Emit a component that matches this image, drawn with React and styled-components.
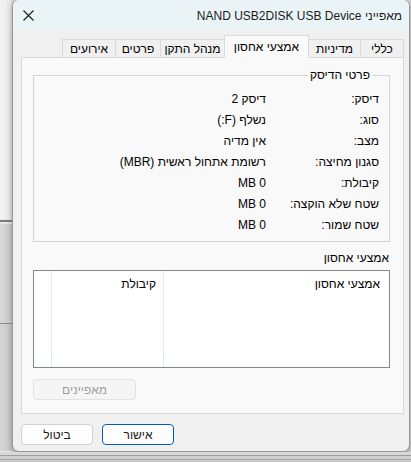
import React from 'react'
import styled, { createGlobalStyle } from 'styled-components'

const GlobalStyle = createGlobalStyle`
  html, body {
    margin: 0;
    padding: 0;
    background: #cfcfcf;
  }
  body {
    font-family: "Liberation Sans", "DejaVu Sans", sans-serif;
    font-size: 12px;
    color: #000;
  }
`

const details = [
    { label: 'דיסק:', value: 'דיסק 2' },
    { label: 'סוג:', value: 'נשלף (F:)' },
    { label: 'מצב:', value: 'אין מדיה' },
    { label: 'סגנון מחיצה:', value: 'רשומת אתחול ראשית (MBR)' },
    { label: 'קיבולת:', value: 'MB 0' },
    { label: 'שטח שלא הוקצה:', value: 'MB 0' },
    { label: 'שטח שמור:', value: 'MB 0' },
]

const tabs = [
    { title: 'כללי', width: 44 },
    { title: 'מדיניות', width: 53 },
    { title: 'אמצעי אחסון', width: 85, active: true },
    { title: 'מנהל התקן', width: 65 },
    { title: 'פרטים', width: 46 },
    { title: 'אירועים', width: 54 },
]

export default function App() {
    return (
        <>
            <GlobalStyle />
            <Screen>
                <LeftStrip>
                    <StripTop />
                    <StripMid />
                    <StripLow />
                </LeftStrip>
                <Dialog dir="rtl">
                    <TitleBar>
                        <Title>מאפייני NAND USB2DISK USB Device</Title>
                        <CloseButton aria-label="סגור">
                            <svg width="11" height="11" viewBox="0 0 11 11">
                                <path d="M0.5 0.5 L10.5 10.5 M10.5 0.5 L0.5 10.5" stroke="#1a1a1a" strokeWidth="1.1" fill="none" />
                            </svg>
                        </CloseButton>
                    </TitleBar>

                    <Body>
                        <TabRow>
                            {tabs.map(t => (
                                <Tab key={t.title} $active={t.active} $width={t.width}>{t.title}</Tab>
                            ))}
                        </TabRow>

                        <Panel>
                            <GroupBox>
                                <Legend>פרטי הדיסק</Legend>
                                <DetailGrid>
                                    {details.map(d => (
                                        <React.Fragment key={d.label}>
                                            <DetailLabel>{d.label}</DetailLabel>
                                            <DetailValue>{d.value}</DetailValue>
                                        </React.Fragment>
                                    ))}
                                </DetailGrid>
                            </GroupBox>

                            <SectionLabel>אמצעי אחסון</SectionLabel>
                            <ListBox>
                                <ListColumn $width={226} $pad={9}>אמצעי אחסון</ListColumn>
                                <ListColumn $width={112} $pad={7}>קיבולת</ListColumn>
                                <ListColumn $width={18} $pad={0} $last />
                            </ListBox>

                            <PropsButton disabled>מאפיינים</PropsButton>
                        </Panel>

                        <Footer>
                            <DialogButton $primary>אישור</DialogButton>
                            <DialogButton>ביטול</DialogButton>
                        </Footer>
                    </Body>
                </Dialog>
                <BottomStrip />
            </Screen>
        </>
    )
}

const Screen = styled.div`
    display: grid;
    grid-template-columns: 12px 398px 1px;
    grid-template-rows: 452px 10px;
    width: 411px;
    height: 462px;
    overflow: hidden;
`

const LeftStrip = styled.div`
    display: grid;
    grid-template-rows: 220px 104px 1fr;
`

const StripTop = styled.div`
    background: linear-gradient(to right, #f3f3f3, #e9e9e9 80%, #d8d8d8);
    border-bottom: 1px solid #e4e4e4;
`

const StripMid = styled.div`
    background: linear-gradient(to right, #d9d9d9, #cbcbcb 85%, #bdbdbd);
    border-top: 2px solid #7d7d7d;
    box-shadow: inset 0 2px 0 #e6e6e6;
    border-bottom: 1px solid #8c8c8c;
`

const StripLow = styled.div`
    background: linear-gradient(to right, #d6d6d6, #c9c9c9 85%, #bcbcbc);
    box-shadow: inset 0 -6px 0 -5px #ececec;
`

const BottomStrip = styled.div`
    grid-column: 1 / -1;
    background: linear-gradient(to bottom, #d8d8d8 0, #d8d8d8 3px, #9e9e9e 3px, #9e9e9e 4px, #d0d0d0 4px, #d0d0d0 7px, #a8a8a8 7px, #a8a8a8 8px, #c9c9c9 8px);
`

const Dialog = styled.div`
    display: flex;
    flex-direction: column;
    background: #f0f0f0;
    border: 1px solid #9a9a9a;
    border-top: none;
    border-radius: 7px;
    overflow: hidden;
    box-shadow: 0 2px 6px rgba(0, 0, 0, 0.25);
`

const TitleBar = styled.div`
    display: flex;
    align-items: center;
    justify-content: space-between;
    height: 30px;
    padding: 0 7px 0 10px;
    background: #eaf4f7;
`

const Title = styled.div`
    font-size: 12px;
    color: #1a1a1a;
    padding-top: 1px;
`

const CloseButton = styled.div`
    display: flex;
    align-items: center;
    justify-content: center;
    width: 11px;
    height: 11px;
    padding-top: 1px;
`

const Body = styled.div`
    display: flex;
    flex-direction: column;
    padding: 5px 5px 0 8px;
    flex: 1;
`

const TabRow = styled.div`
    display: flex;
    align-items: flex-end;
    height: 22px;
    position: relative;
    z-index: 1;
`

const Tab = styled.div`
    box-sizing: border-box;
    width: ${p => p.$width}px;
    height: ${p => (p.$active ? 23 : 19)}px;
    display: flex;
    align-items: center;
    justify-content: center;
    background: ${p => (p.$active ? '#f9f9f9' : '#f0f0f0')};
    border: 1px solid #d9d9d9;
    border-bottom: ${p => (p.$active ? '1px solid #f9f9f9' : '1px solid #d9d9d9')};
    margin-left: -1px;
    margin-bottom: -1px;
    padding-top: 1px;
    font-size: 12px;
    white-space: nowrap;
    z-index: ${p => (p.$active ? 2 : 1)};
`

const Panel = styled.div`
    box-sizing: border-box;
    height: 357px;
    display: flex;
    flex-direction: column;
    background: #f9f9f9;
    border: 1px solid #d9d9d9;
    padding: 10px 13px 0 11px;
`

const GroupBox = styled.fieldset`
    margin: 0;
    padding: 6px 10px 6px 0;
    border: 1px solid #d5d5d5;
    min-width: 0;
`

const Legend = styled.legend`
    padding: 0 2px;
    margin-right: 7px;
    line-height: 14px;
    font-size: 12px;
`

const DetailGrid = styled.div`
    display: grid;
    grid-template-columns: 113px 1fr;
    grid-auto-rows: 21px;
    align-items: center;
`

const DetailLabel = styled.div`
    white-space: nowrap;
`

const DetailValue = styled.div`
    white-space: nowrap;
`

const SectionLabel = styled.div`
    margin-top: 9px;
    padding-right: 1px;
    line-height: 14px;
`

const ListBox = styled.div`
    box-sizing: border-box;
    height: 98px;
    margin-top: 5px;
    display: flex;
    background: #fff;
    border: 1px solid #82878f;
`

const ListColumn = styled.div`
    box-sizing: border-box;
    width: ${p => p.$width}px;
    flex: ${p => (p.$last ? 1 : 'none')};
    padding: 6px ${p => p.$pad}px 0 0;
    border-left: ${p => (p.$last ? 'none' : '1px solid #e3e9f2')};
    line-height: 14px;
    white-space: nowrap;
`

const PropsButton = styled.button`
    box-sizing: border-box;
    align-self: flex-end;
    width: 103px;
    height: 21px;
    margin-top: 11px;
    background: #f5f5f5;
    border: 1px solid #e2e2e2;
    border-radius: 4px;
    color: #9d9d9d;
    font-family: inherit;
    font-size: 12px;
    padding: 0;
`

const Footer = styled.div`
    display: flex;
    gap: 9px;
    justify-content: flex-end;
    padding-top: 10px;
    padding-left: 0;
`

const DialogButton = styled.button`
    box-sizing: border-box;
    width: 72px;
    height: 21px;
    background: #fdfdfd;
    border: 1px solid ${p => (p.$primary ? '#005fb8' : '#d0d0d0')};
    border-radius: 4px;
    color: #1a1a1a;
    font-family: inherit;
    font-size: 12px;
    padding: 0;
`
